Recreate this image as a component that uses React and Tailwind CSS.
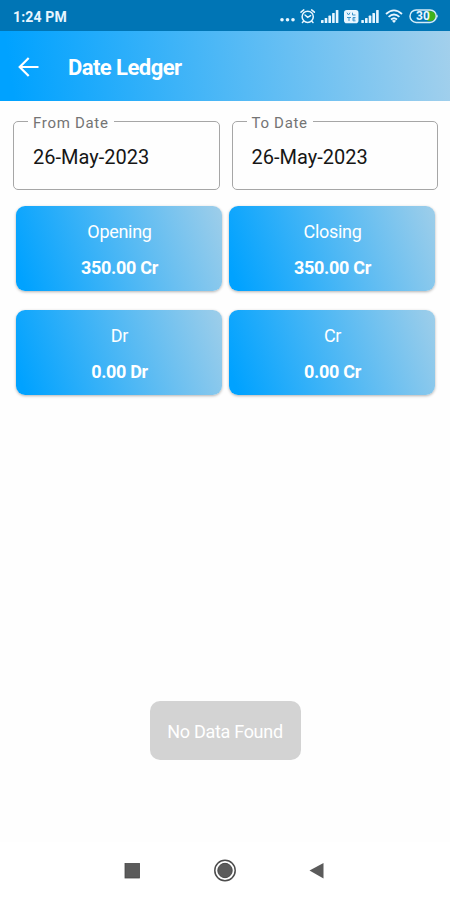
function StatusIcons() {
  return (
    <svg width="161" height="20" viewBox="278 6 161 20" fill="#e8f6ff">
      <circle cx="282" cy="19.7" r="1.8" />
      <circle cx="287.5" cy="19.7" r="1.8" />
      <circle cx="293" cy="19.7" r="1.8" />
      {/* alarm clock */}
      <g fill="none" stroke="#e8f6ff" strokeWidth="1.5" strokeLinecap="round">
        <circle cx="307.7" cy="16.8" r="5.6" />
        <path d="M301 12.2 303.8 9.9M314.4 12.2 311.6 9.9M303.6 21.3 302.4 22.5M311.8 21.3 313 22.5M305 15 307.7 17.4 310.6 15.6" />
      </g>
      {/* first signal */}
      <rect x="321" y="20" width="2.6" height="3" rx=".6" />
      <rect x="324.7" y="18" width="2.6" height="5" rx=".6" />
      <rect x="328.4" y="15.6" width="2.6" height="7.4" rx=".6" />
      <rect x="332.1" y="13" width="2.6" height="10" rx=".6" />
      <rect x="335.8" y="10" width="2.6" height="13" rx=".6" />
      {/* volte badge */}
      <rect x="344" y="10" width="14.5" height="13.2" rx="2.8" />
      <path d="M347 12.7 348.5 15 350 12.7M352.5 12.7v2.3h3M347 17.5h4M349 17.5v3.5M355.5 17.5h-2.5v3.3h2.5M353 19h2.2" fill="none" stroke="#3e96cc" strokeWidth="1" />
      {/* second signal */}
      <rect x="361.3" y="20" width="2.6" height="3" rx=".6" />
      <rect x="365" y="18" width="2.6" height="5" rx=".6" />
      <rect x="368.7" y="15.6" width="2.6" height="7.4" rx=".6" />
      <rect x="372.4" y="13" width="2.6" height="10" rx=".6" />
      <rect x="376.1" y="10" width="2.6" height="13" rx=".6" />
      {/* wifi */}
      <g fill="none" stroke="#e8f6ff" strokeWidth="1.8">
        <path d="M386 14Q394 6.8 402 14" />
        <path d="M388.6 16.9Q394 12 399.4 16.9" />
        <path d="M391 19.5Q394 16.9 397 19.5" />
      </g>
      <path d="M391.9 20.8Q394 19.2 396.1 20.8L394 23Z" />
      {/* battery */}
      <path d="M427.5 11.2H431a4.9 4.9 0 0 1 0 9.8H427.5Z" fill="#3fb11c" />
      <rect x="410" y="10" width="26.3" height="12.4" rx="6.2" fill="none" stroke="#d5ecf8" strokeWidth="1.5" />
      <path d="M437 14.2q1.8 2 0 4z" />
      <text x="423" y="20.4" textAnchor="middle" fontFamily="Roboto, sans-serif" fontWeight="700" fontSize="12">30</text>
    </svg>
  );
}

function DateField({ label, value }) {
  return (
    <fieldset className="h-[76px] min-w-0 rounded-[5px] border border-[#a6a6a6] pl-[14px]">
      <legend className="h-[14px] px-[5px] text-[15px] leading-[18px] tracking-[0.7px] text-[#747474]">{label}</legend>
      <div className="pt-[17px] pl-[5px] text-[20px] leading-[24px] text-[#161616]">{value}</div>
    </fieldset>
  );
}

function Card({ label, value }) {
  return (
    <div className="flex h-[85px] flex-col items-center rounded-[9px] bg-[linear-gradient(70deg,#00a2ff_4%,#9bcdea_98%)] pt-[14px] pl-px text-white shadow-[0_1px_3px_rgba(0,0,0,0.3)]">
      <div className="text-[18px] leading-[24px] tracking-[-0.3px]">{label}</div>
      <div className="mt-[12px] text-[18px] leading-[24px] font-bold tracking-[-0.32px]">{value}</div>
    </div>
  );
}

export default function App() {
  return (
    <div className="flex h-[900px] w-[450px] flex-col overflow-hidden bg-[#fefefe] font-[Roboto,sans-serif]">
      <div className="flex h-[31px] shrink-0 items-center justify-between bg-[#0075b5] pr-[11px] pl-[13px]">
        <span className="pt-[3px] text-[14px] leading-5 font-bold tracking-[0.15px] text-[#e8f6ff]">1:24 PM</span>
        <StatusIcons />
      </div>

      <header className="flex h-[70px] shrink-0 items-center bg-[linear-gradient(82deg,#00a2ff_3%,#a3d0ec_100%)] pl-[18px]">
        <svg className="mt-px" width="21" height="20" viewBox="0 0 21 20" fill="none" stroke="white" strokeWidth="2.2">
          <path d="M20.5 10H2M10.7 1 1.7 10l9 9" />
        </svg>
        <h1 className="ml-[29px] pt-[3px] text-[22px] leading-7 font-bold tracking-[-0.55px] text-white">Date Ledger</h1>
      </header>

      <div className="mt-[13px] grid grid-cols-2 gap-[12px] pr-[12px] pl-[13px]">
        <DateField label="From Date" value="26-May-2023" />
        <DateField label="To Date" value="26-May-2023" />
      </div>

      <div className="mt-[16px] grid grid-cols-2 gap-x-[7px] gap-y-[19px] pr-[15px] pl-[16px]">
        <Card label="Opening" value="350.00 Cr" />
        <Card label="Closing" value="350.00 Cr" />
        <Card label="Dr" value="0.00 Dr" />
        <Card label="Cr" value="0.00 Cr" />
      </div>

      <div className="mt-auto mb-[82px] flex h-[59px] w-[151px] items-center justify-center self-center rounded-[10px] bg-[#d3d3d3] pt-[2px] text-[18px] tracking-[-0.3px] text-white">
        No Data Found
      </div>

      <nav className="flex h-[58px] shrink-0 items-center justify-center bg-white">
        <svg width="202" height="24" viewBox="0 0 202 24" fill="#5b5b5b">
          <rect x="1" y="4.5" width="14.5" height="14.5" stroke="#484848" strokeWidth="0.8" />
          <circle cx="101" cy="11.5" r="10.2" fill="none" stroke="#4c4c4c" strokeWidth="1.5" />
          <circle cx="101" cy="11.5" r="7.2" stroke="#484848" strokeWidth="1" />
          <path d="M185.5 11.5 199.5 4v15.5z" />
        </svg>
      </nav>
    </div>
  );
}
